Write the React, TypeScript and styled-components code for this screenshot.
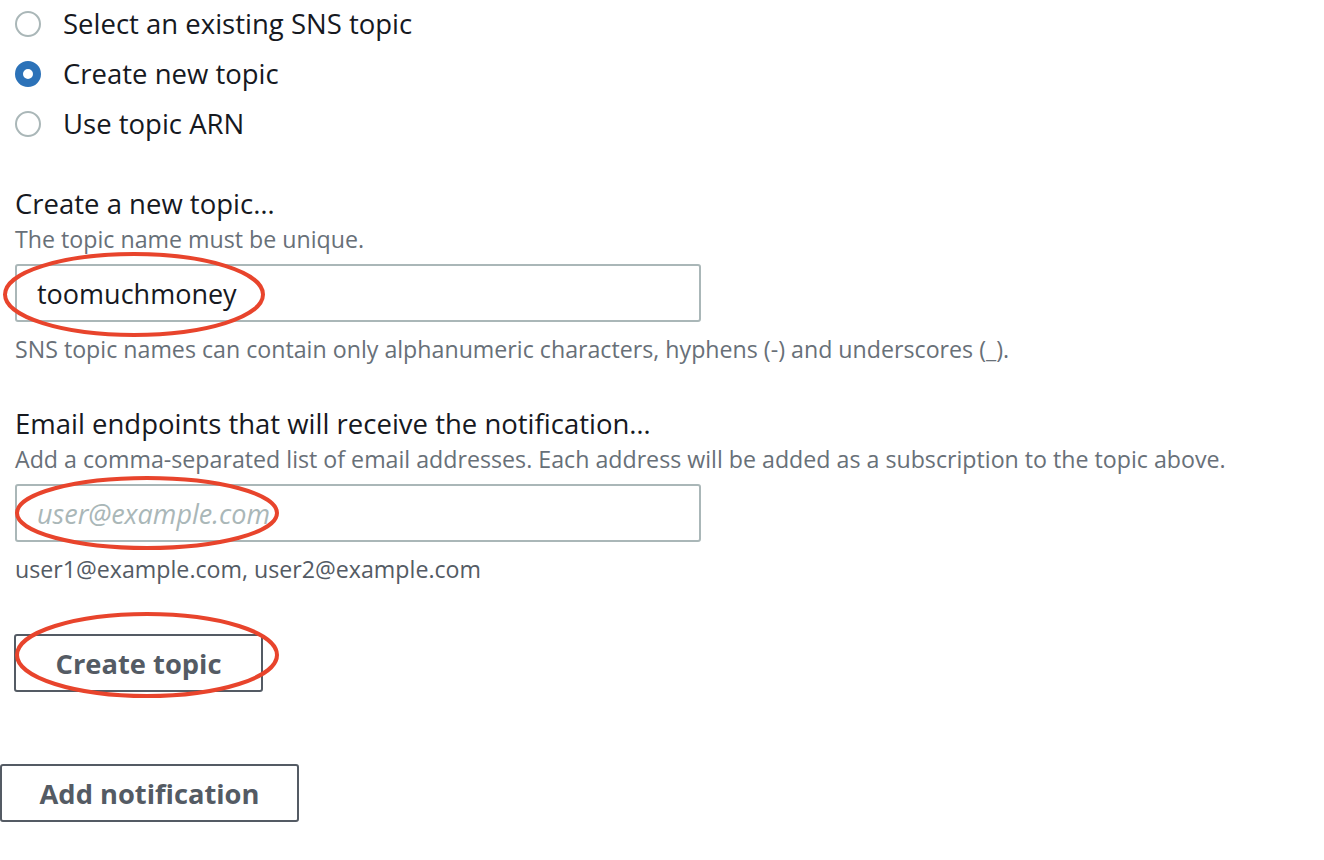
import React from 'react'
import styled, { createGlobalStyle } from 'styled-components'

const FONT = `'Open Sans', 'Liberation Sans', sans-serif`

const GlobalStyle = createGlobalStyle`
    body {
        margin: 0;
        background: #ffffff;
        font-family: ${FONT};
        color: #16191f;
    }
`

const Page = styled.div`
    width: 1324px;
    height: 860px;
    overflow: hidden;
`
const Section = styled.div`
    padding-left: 15px;
    display: flex;
    flex-direction: column;
    align-items: flex-start;
`
const RadioGroup = styled.div`
    display: flex;
    flex-direction: column;
    margin-left: -15px;
    margin-top: -2px;
`
const RadioRow = styled.label`
    display: flex;
    align-items: center;
    height: 50px;
    gap: 22px;
    padding-left: 15px;
    font-size: 27.5px;
    cursor: pointer;
`
const RadioDot = styled.span<{ checked?: boolean }>`
    width: 26px;
    height: 26px;
    margin-top: 2px;
    box-sizing: border-box;
    border-radius: 50%;
    border: ${(p) => (p.checked ? '8px solid #2c72b8' : '2px solid #aab7b8')};
    background: #ffffff;
`
const Heading = styled.div<{ top: number }>`
    font-size: 27.5px;
    line-height: 32px;
    margin-top: ${(p) => p.top}px;
`
const Description = styled.div`
    font-size: 23.2px;
    line-height: 30px;
    color: #687078;
    margin-top: 4px;
`
const FieldWrap = styled.div`
    position: relative;
    margin-top: 10px;
`
const Input = styled.input`
    width: 686px;
    height: 58px;
    box-sizing: border-box;
    border: 2px solid #aab7b8;
    border-radius: 3px;
    padding: 0 20px;
    font-family: ${FONT};
    font-size: 27px;
    color: #16191f;
    outline: none;
    &::placeholder {
        color: #aab7b8;
        font-style: italic;
    }
`
const Hint = styled.div<{ dark?: boolean }>`
    font-size: 23.2px;
    line-height: 30px;
    margin-top: 12px;
    color: ${(p) => (p.dark ? '#545b64' : '#687078')};
`
const Button = styled.button<{ w: number; top: number }>`
    position: relative;
    width: ${(p) => p.w}px;
    height: 58px;
    margin-top: ${(p) => p.top}px;
    box-sizing: border-box;
    background: #ffffff;
    border: 2px solid #545b64;
    border-radius: 3px;
    font-family: ${FONT};
    font-size: 27.3px;
    font-weight: 700;
    color: #545b64;
    cursor: pointer;
`
const ButtonWrap = styled.div`
    position: relative;
    margin-left: -1px;
`
// red hand-drawn style annotation circles over the fields
const Mark = styled.svg<{ l: number; t: number }>`
    position: absolute;
    left: ${(p) => p.l}px;
    top: ${(p) => p.t}px;
    overflow: visible;
    pointer-events: none;
`

function Ellipse({ l, t, w, h }: { l: number; t: number; w: number; h: number }) {
    return (
        <Mark l={l} t={t} width={w} height={h}>
            <ellipse
                cx={w / 2}
                cy={h / 2}
                rx={w / 2 - 2}
                ry={h / 2 - 2}
                fill="none"
                stroke="#e8442c"
                strokeWidth={4}
            />
        </Mark>
    )
}

export default function App() {
    return (
        <Page>
            <GlobalStyle />
            <Section>
                <RadioGroup>
                    <RadioRow>
                        <RadioDot />
                        Select an existing SNS topic
                    </RadioRow>
                    <RadioRow>
                        <RadioDot checked />
                        Create new topic
                    </RadioRow>
                    <RadioRow>
                        <RadioDot />
                        Use topic ARN
                    </RadioRow>
                </RadioGroup>

                <Heading top={40}>Create a new topic…</Heading>
                <Description>The topic name must be unique.</Description>
                <FieldWrap>
                    <Input defaultValue="toomuchmoney" />
                    <Ellipse l={-12} t={-12} w={262} h={85} />
                </FieldWrap>
                <Hint>
                    SNS topic names can contain only alphanumeric characters, hyphens (-) and underscores (_).
                </Hint>

                <Heading top={44}>Email endpoints that will receive the notification…</Heading>
                <Description>
                    Add a comma-separated list of email addresses. Each address will be added as a subscription to the topic above.
                </Description>
                <FieldWrap>
                    <Input placeholder="user@example.com" />
                    <Ellipse l={0} t={-8} w={264} h={74} />
                </FieldWrap>
                <Hint dark>user1@example.com, user2@example.com</Hint>

                <ButtonWrap>
                    <Button w={249} top={50}>Create topic</Button>
                    <Ellipse l={1} t={28} w={264} h={86} />
                </ButtonWrap>
            </Section>
            <Button w={299} top={72}>Add notification</Button>
        </Page>
    )
}
